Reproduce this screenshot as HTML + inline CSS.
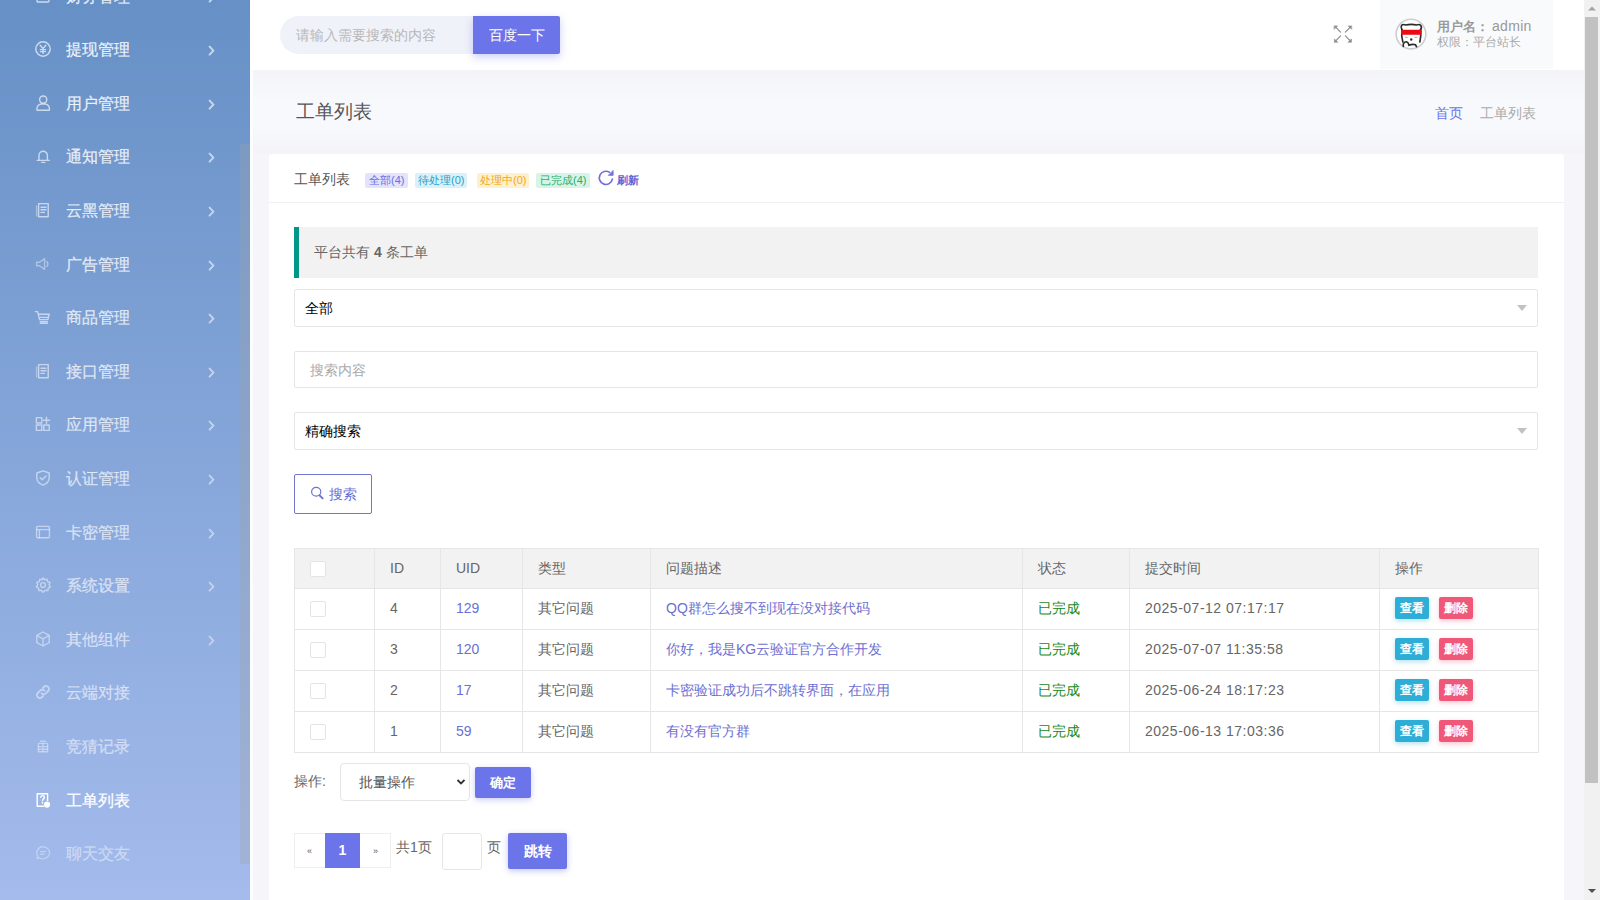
<!DOCTYPE html>
<html><head><meta charset="utf-8">
<style>
*{box-sizing:border-box;margin:0;padding:0}
html,body{width:1600px;height:900px;overflow:hidden;background:#f6f6fa;font-family:"Liberation Sans",sans-serif;font-size:14px;color:#666}
.abs{position:absolute}
#sb{left:0;top:0;width:250px;height:900px;background:linear-gradient(180deg,#6690c6 0%,#a4bbec 100%);overflow:hidden;color:rgba(255,255,255,.72)}
#sbtrack{left:240px;top:144px;width:10px;height:720px;background:rgba(160,160,160,.28)}
.mi{position:absolute;left:0;width:250px;height:54px}
.mi .ic{position:absolute;left:34px;top:18px;width:18px;height:18px;opacity:.8}
.mi.act .ic{opacity:1}
.mi .tx{position:absolute;left:66px;top:1px;line-height:54px;font-size:15.5px;-webkit-text-stroke:.25px currentColor}
.mi .ch{position:absolute;left:207px;top:23px;width:9px;height:12px}

#hd{left:250px;top:0;width:1334px;height:70px;background:#fff}
#wstrip{left:250px;top:70px;width:3px;height:830px;background:#fbfdff}
#srch{left:280px;top:16px;width:193px;height:38px;background:#f0f2f9;border-radius:19px 0 0 19px;color:#b8b8b8;font-size:14px;line-height:38px;padding-left:16px}
#sbtn{left:473px;top:16px;width:87px;height:38px;background:#6b74e9;color:#fff;font-size:14px;line-height:38px;text-align:center;border-radius:0 2px 2px 0;box-shadow:0 3px 8px rgba(107,116,233,.35)}
#fs{left:1334px;top:25px;width:18px;height:18px}
#user{left:1380px;top:0;width:173px;height:69px;background:#f9fafc}
#avatar{left:1395px;top:19px;width:32px;height:32px;border-radius:50%;border:1px solid #ddd;background:#fff;overflow:hidden}
#un{left:1437px;top:17px;font-size:13px;color:#999;line-height:18px;white-space:nowrap;font-weight:bold}
#ur{left:1437px;top:34px;font-size:12px;color:#aaa;line-height:16px;white-space:nowrap}
#scroll{left:1584px;top:0;width:16px;height:900px;background:#f1f1f1}
#thumb{left:1585px;top:17px;width:13px;height:766px;background:#c1c1c1}
#ptitle{left:296px;top:99px;font-size:19px;color:#555;line-height:26px}
#bc{left:1435px;top:103px;font-size:14px;line-height:20px;white-space:nowrap}
#card{left:269px;top:154px;width:1295px;height:760px;background:#fff;border-radius:3px}
#chd{left:269px;top:154px;width:1295px;height:49px;border-bottom:1px solid #f0f0f0}
.tag{position:absolute;top:173px;height:15px;line-height:15px;font-size:11px;padding:0 3px;border-radius:2px;white-space:nowrap}
#alert{left:294px;top:227px;width:1244px;height:51px;background:#f2f2f2;border-left:5px solid #009688;line-height:51px;padding-left:15px;color:#666;font-size:14px}
.sel{position:absolute;left:294px;width:1244px;background:#fff;border:1px solid #e6e6e6;border-radius:2px;line-height:36px;padding-left:10px;color:#000;font-size:14px}
.sel .arr{position:absolute;right:10px;top:15px;width:0;height:0;border-left:5.5px solid transparent;border-right:5.5px solid transparent;border-top:6px solid #c2c2c2}
#sbtn2{left:294px;top:474px;width:78px;height:40px;border:1px solid #7276cc;border-radius:2px;color:#6a6fd4;line-height:38px;font-size:14px;padding-left:34px}
table{position:absolute;left:294px;top:548px;width:1245px;border-collapse:collapse;font-size:14px;color:#666}
th,td{border:1px solid #e6e6e6;padding:0 15px 2px;text-align:left;font-weight:normal;height:41px;line-height:20px}
th{background:#f2f2f2;height:40px}
.cb{display:inline-block;width:16px;height:16px;border:1px solid #e4e4e4;border-radius:2px;background:#fff;vertical-align:middle}
.lk{color:#6b70d2}
.ok{color:#1a8a1a}
.dt{letter-spacing:.5px}
.bx{display:inline-block;height:22px;line-height:22px;padding:0 5px;font-size:12px;color:#fff;font-weight:bold;border-radius:2px;vertical-align:middle}
.bv{background:#2eaed6;box-shadow:0 2px 5px rgba(46,174,214,.35)}
.bd{background:#f0587a;box-shadow:0 2px 5px rgba(240,88,122,.35);margin-left:10px}
</style></head><body>
<div id="sb" class="abs">
<div class="mi" style="top:-31.4px;color:rgba(255,255,255,0.85)"><svg class="ic" viewBox="0 0 18 18" fill="none" stroke="currentColor" stroke-width="1.4" stroke-linecap="round" stroke-linejoin="round"><rect x="3" y="3" width="12" height="12" rx="1"/></svg><span class="tx">财务管理</span><svg class="ch" viewBox="0 0 9 12" fill="none" stroke="currentColor" stroke-width="2" stroke-linecap="round" stroke-linejoin="round" opacity=".75"><path d="M2.6 1.6 6.4 5.6 2.6 9.6"/></svg></div>
<div class="mi" style="top:22.2px;color:rgba(255,255,255,0.85)"><svg class="ic" viewBox="0 0 18 18" fill="none" stroke="currentColor" stroke-width="1.4" stroke-linecap="round" stroke-linejoin="round"><circle cx="9" cy="9" r="7.2"/><path d="M6.2 5.2 9 8.6 11.8 5.2M9 8.6V13.4M6.4 9.6h5.2M6.4 11.6h5.2"/></svg><span class="tx">提现管理</span><svg class="ch" viewBox="0 0 9 12" fill="none" stroke="currentColor" stroke-width="2" stroke-linecap="round" stroke-linejoin="round" opacity=".75"><path d="M2.6 1.6 6.4 5.6 2.6 9.6"/></svg></div>
<div class="mi" style="top:75.8px;color:rgba(255,255,255,0.83)"><svg class="ic" viewBox="0 0 18 18" fill="none" stroke="currentColor" stroke-width="1.4" stroke-linecap="round" stroke-linejoin="round"><circle cx="9.2" cy="5.6" r="3.6"/><path d="M3 16.2v-1.6a4.6 4.6 0 0 1 4.6-4.6h3.2a4.6 4.6 0 0 1 4.6 4.6v1.6z"/></svg><span class="tx">用户管理</span><svg class="ch" viewBox="0 0 9 12" fill="none" stroke="currentColor" stroke-width="2" stroke-linecap="round" stroke-linejoin="round" opacity=".75"><path d="M2.6 1.6 6.4 5.6 2.6 9.6"/></svg></div>
<div class="mi" style="top:129.4px;color:rgba(255,255,255,0.8)"><svg class="ic" viewBox="0 0 18 18" fill="none" stroke="currentColor" stroke-width="1.4" stroke-linecap="round" stroke-linejoin="round"><path d="M5 13.2V8.4a4.2 4.2 0 0 1 8.4 0v4.8M3.2 13.4h12M7.6 15.4h3.2"/></svg><span class="tx">通知管理</span><svg class="ch" viewBox="0 0 9 12" fill="none" stroke="currentColor" stroke-width="2" stroke-linecap="round" stroke-linejoin="round" opacity=".75"><path d="M2.6 1.6 6.4 5.6 2.6 9.6"/></svg></div>
<div class="mi" style="top:183.0px;color:rgba(255,255,255,0.77)"><svg class="ic" viewBox="0 0 18 18" fill="none" stroke="currentColor" stroke-width="1.4" stroke-linecap="round" stroke-linejoin="round"><rect x="4.6" y="2.6" width="9.6" height="13.2"/><path d="M7 6.2h5M7 8.8h5M7 11.4h3.4"/><path d="M2.6 5v10" opacity=".6"/></svg><span class="tx">云黑管理</span><svg class="ch" viewBox="0 0 9 12" fill="none" stroke="currentColor" stroke-width="2" stroke-linecap="round" stroke-linejoin="round" opacity=".75"><path d="M2.6 1.6 6.4 5.6 2.6 9.6"/></svg></div>
<div class="mi" style="top:236.6px;color:rgba(255,255,255,0.75)"><svg class="ic" viewBox="0 0 18 18" fill="none" stroke="currentColor" stroke-width="1.4" stroke-linecap="round" stroke-linejoin="round"><path d="M2.6 7.2h3l5-3.6v10.8l-5-3.6h-3zM12.8 6.4a3.6 3.6 0 0 1 0 5.2" opacity=".7"/></svg><span class="tx">广告管理</span><svg class="ch" viewBox="0 0 9 12" fill="none" stroke="currentColor" stroke-width="2" stroke-linecap="round" stroke-linejoin="round" opacity=".75"><path d="M2.6 1.6 6.4 5.6 2.6 9.6"/></svg></div>
<div class="mi" style="top:290.2px;color:rgba(255,255,255,0.73)"><svg class="ic" viewBox="0 0 18 18" fill="none" stroke="currentColor" stroke-width="1.4" stroke-linecap="round" stroke-linejoin="round"><path d="M1.4 3.6h2.2l2 8h8.2l1.4-5.4H4.8M6.4 9.4h7.4"/><path d="M6.2 13.6h7.2M6.2 15.2h7.2"/></svg><span class="tx">商品管理</span><svg class="ch" viewBox="0 0 9 12" fill="none" stroke="currentColor" stroke-width="2" stroke-linecap="round" stroke-linejoin="round" opacity=".75"><path d="M2.6 1.6 6.4 5.6 2.6 9.6"/></svg></div>
<div class="mi" style="top:343.8px;color:rgba(255,255,255,0.71)"><svg class="ic" viewBox="0 0 18 18" fill="none" stroke="currentColor" stroke-width="1.4" stroke-linecap="round" stroke-linejoin="round"><rect x="4.6" y="2.6" width="9.6" height="13.2"/><path d="M7 6.2h5M7 8.8h5M7 11.4h3.4"/><path d="M2.6 5v10" opacity=".6"/></svg><span class="tx">接口管理</span><svg class="ch" viewBox="0 0 9 12" fill="none" stroke="currentColor" stroke-width="2" stroke-linecap="round" stroke-linejoin="round" opacity=".75"><path d="M2.6 1.6 6.4 5.6 2.6 9.6"/></svg></div>
<div class="mi" style="top:397.4px;color:rgba(255,255,255,0.69)"><svg class="ic" viewBox="0 0 18 18" fill="none" stroke="currentColor" stroke-width="1.4" stroke-linecap="round" stroke-linejoin="round"><rect x="2.4" y="2.6" width="5.4" height="5.4"/><rect x="2.4" y="10" width="5.4" height="5.4"/><rect x="9.8" y="10" width="5.4" height="5.4"/><path d="M12.5 2.2v6.2M9.4 5.3h6.2"/></svg><span class="tx">应用管理</span><svg class="ch" viewBox="0 0 9 12" fill="none" stroke="currentColor" stroke-width="2" stroke-linecap="round" stroke-linejoin="round" opacity=".75"><path d="M2.6 1.6 6.4 5.6 2.6 9.6"/></svg></div>
<div class="mi" style="top:451.0px;color:rgba(255,255,255,0.66)"><svg class="ic" viewBox="0 0 18 18" fill="none" stroke="currentColor" stroke-width="1.4" stroke-linecap="round" stroke-linejoin="round"><path d="M9 1.8 15.2 4v4.6c0 4-2.8 6.4-6.2 7.6C5.6 15 2.8 12.6 2.8 8.6V4z"/><path d="M6.2 8.8l2 2 3.8-3.8"/></svg><span class="tx">认证管理</span><svg class="ch" viewBox="0 0 9 12" fill="none" stroke="currentColor" stroke-width="2" stroke-linecap="round" stroke-linejoin="round" opacity=".75"><path d="M2.6 1.6 6.4 5.6 2.6 9.6"/></svg></div>
<div class="mi" style="top:504.6px;color:rgba(255,255,255,0.62)"><svg class="ic" viewBox="0 0 18 18" fill="none" stroke="currentColor" stroke-width="1.4" stroke-linecap="round" stroke-linejoin="round"><rect x="2.6" y="3.4" width="12.8" height="11.4" rx="1"/><path d="M2.6 6.6h12.8M5.4 6.6v8.2"/></svg><span class="tx">卡密管理</span><svg class="ch" viewBox="0 0 9 12" fill="none" stroke="currentColor" stroke-width="2" stroke-linecap="round" stroke-linejoin="round" opacity=".75"><path d="M2.6 1.6 6.4 5.6 2.6 9.6"/></svg></div>
<div class="mi" style="top:558.2px;color:rgba(255,255,255,0.6)"><svg class="ic" viewBox="0 0 18 18" fill="none" stroke="currentColor" stroke-width="1.4" stroke-linecap="round" stroke-linejoin="round"><circle cx="9" cy="9" r="2.4"/><path d="M9 1.8l1.6 2 2.4-.6.6 2.4 2.4.9-.9 2.3 1.3 2.1-2.2 1.2-.3 2.5-2.5-.3L9 16.2l-1.6-1.9-2.5.3-.3-2.5-2.2-1.2 1.3-2.1-.9-2.3 2.4-.9.6-2.4 2.4.6z"/></svg><span class="tx">系统设置</span><svg class="ch" viewBox="0 0 9 12" fill="none" stroke="currentColor" stroke-width="2" stroke-linecap="round" stroke-linejoin="round" opacity=".75"><path d="M2.6 1.6 6.4 5.6 2.6 9.6"/></svg></div>
<div class="mi" style="top:611.8px;color:rgba(255,255,255,0.58)"><svg class="ic" viewBox="0 0 18 18" fill="none" stroke="currentColor" stroke-width="1.4" stroke-linecap="round" stroke-linejoin="round"><path d="M9 2 15.2 5.4v7.2L9 16 2.8 12.6V5.4zM2.8 5.4 9 8.8l6.2-3.4M9 8.8V16"/></svg><span class="tx">其他组件</span><svg class="ch" viewBox="0 0 9 12" fill="none" stroke="currentColor" stroke-width="2" stroke-linecap="round" stroke-linejoin="round" opacity=".75"><path d="M2.6 1.6 6.4 5.6 2.6 9.6"/></svg></div>
<div class="mi" style="top:665.4px;color:rgba(255,255,255,0.55)"><svg class="ic" viewBox="0 0 18 18" fill="none" stroke="currentColor" stroke-width="1.4" stroke-linecap="round" stroke-linejoin="round"><path d="M7.6 10.4a3 3 0 0 0 4.2 0l2.6-2.6a3 3 0 0 0-4.2-4.2L9 4.8M10.4 7.6a3 3 0 0 0-4.2 0L3.6 10.2a3 3 0 0 0 4.2 4.2L9 13.2" stroke-width="2"/></svg><span class="tx">云端对接</span></div>
<div class="mi" style="top:719.0px;color:rgba(255,255,255,0.5)"><svg class="ic" viewBox="0 0 18 18" fill="none" stroke="currentColor" stroke-width="1.4" stroke-linecap="round" stroke-linejoin="round"><rect x="4.4" y="6.4" width="9.2" height="8.4"/><path d="M4.4 9.6h9.2M4.4 12.2h9.2M9 6.4v8.4M6.4 4.2h5.2"/></svg><span class="tx">竞猜记录</span></div>
<div class="mi act" style="top:772.6px;color:rgba(255,255,255,1)"><svg class="ic" viewBox="0 0 18 18" fill="none" stroke="currentColor" stroke-width="1.4" stroke-linecap="round" stroke-linejoin="round"><path d="M13.6 9.4V2.8H3.2v12.4h6.6"/><path d="M6.8 6.4a1.8 1.8 0 1 1 2.6 1.6c-.6.4-.9.8-.9 1.5M8.5 11.4v.6"/><circle cx="13" cy="13.6" r="2.4" fill="currentColor"/></svg><span class="tx">工单列表</span></div>
<div class="mi" style="top:826.2px;color:rgba(255,255,255,0.42)"><svg class="ic" viewBox="0 0 18 18" fill="none" stroke="currentColor" stroke-width="1.4" stroke-linecap="round" stroke-linejoin="round"><path d="M9 2.8a6.4 6 0 1 1-3.4 11l-2.6.8.9-2.4A6.4 6 0 0 1 9 2.8z"/><path d="M6.4 7.6h5.2M6.4 10.2h3.6"/></svg><span class="tx">聊天交友</span></div>
</div>
<div id="sbtrack" class="abs"></div>
<div id="hd" class="abs"></div><div id="wstrip" class="abs"></div><div class="abs" style="left:253px;top:70px;width:1331px;height:84px;background:linear-gradient(180deg,#f3f3f8 0,#f5f6fa 12px,#f7f9fd 35px,#f7f9fd 55px,#f5f6fa 72px,#f3f3f8 84px)"></div>
<div id="srch" class="abs">请输入需要搜索的内容</div>
<div id="sbtn" class="abs">百度一下</div>
<div id="user" class="abs"></div>
<svg class="abs" style="left:1390px;top:14px" width="42" height="42" viewBox="0 0 900 900">
<circle cx="450" cy="430" r="318" fill="#fff" stroke="#cdcdcd" stroke-width="34"/>
<path d="M255 335 C215 270 250 200 335 235 C400 220 510 220 570 235 C650 200 700 270 655 335" fill="none" stroke="#2a2a2a" stroke-width="36" stroke-linecap="round"/>
<path d="M255 330 C245 430 250 520 275 600 M655 330 C665 430 660 520 640 600" fill="none" stroke="#2a2a2a" stroke-width="36" stroke-linecap="round"/>
<rect x="236" y="335" width="444" height="108" rx="24" fill="#ea0a14"/>
<path d="M285 695 C275 640 300 595 350 595 C390 600 400 640 405 668 C460 650 510 650 545 660 L568 700" fill="none" stroke="#2a2a2a" stroke-width="36" stroke-linecap="round"/>
<circle cx="455" cy="545" r="26" fill="#333"/>
<path d="M320 500h60M525 500h60" stroke="#aaa" stroke-width="20"/>
</svg>
<div id="un" class="abs">用户名：<span style="font-size:14px;font-weight:normal;letter-spacing:.3px;margin-left:3px">admin</span></div>
<div id="ur" class="abs">权限：平台站长</div>
<div id="scroll" class="abs"></div>
<div id="thumb" class="abs"></div>
<svg class="abs" style="left:1584px;top:0" width="16" height="17" viewBox="0 0 16 17"><path d="M4 10.5h8L8 6.5z" fill="#a3a3a3"/></svg>
<svg class="abs" style="left:1584px;top:883px" width="16" height="17" viewBox="0 0 16 17"><path d="M4 6h8l-4 4z" fill="#505050"/></svg>
<div id="ptitle" class="abs">工单列表</div>
<div id="bc" class="abs"><span style="color:#6b74e9">首页</span><span style="color:#aaa;margin-left:17px">工单列表</span></div>
<div id="card" class="abs"></div>
<div id="chd" class="abs"></div>
<div class="abs" style="left:294px;top:169px;line-height:20px;color:#555">工单列表</div>
<div id="alert" class="abs">平台共有 <b>4</b> 条工单</div>
<div class="sel" style="top:289px;height:38px">全部<i class="arr"></i></div>
<div class="sel" style="top:351px;height:37px;color:#aaa;padding-left:15px">搜索内容</div>
<div class="sel" style="top:412px;height:38px">精确搜索<i class="arr"></i></div>
<div id="sbtn2" class="abs">搜索</div>
<table>
<tr><th style="width:80px"><span class="cb"></span></th><th style="width:66px">ID</th><th style="width:82px">UID</th><th style="width:128px">类型</th><th style="width:372px">问题描述</th><th style="width:107px">状态</th><th style="width:250px">提交时间</th><th style="width:159px">操作</th></tr>
<tr><td><span class="cb"></span></td><td>4</td><td class="lk">129</td><td>其它问题</td><td class="lk">QQ群怎么搜不到现在没对接代码</td><td class="ok">已完成</td><td class="dt">2025-07-12 07:17:17</td><td><span class="bx bv">查看</span><span class="bx bd">删除</span></td></tr>
<tr><td><span class="cb"></span></td><td>3</td><td class="lk">120</td><td>其它问题</td><td class="lk">你好，我是KG云验证官方合作开发</td><td class="ok">已完成</td><td class="dt">2025-07-07 11:35:58</td><td><span class="bx bv">查看</span><span class="bx bd">删除</span></td></tr>
<tr><td><span class="cb"></span></td><td>2</td><td class="lk">17</td><td>其它问题</td><td class="lk">卡密验证成功后不跳转界面，在应用</td><td class="ok">已完成</td><td class="dt">2025-06-24 18:17:23</td><td><span class="bx bv">查看</span><span class="bx bd">删除</span></td></tr>
<tr><td><span class="cb"></span></td><td>1</td><td class="lk">59</td><td>其它问题</td><td class="lk">有没有官方群</td><td class="ok">已完成</td><td class="dt">2025-06-13 17:03:36</td><td><span class="bx bv">查看</span><span class="bx bd">删除</span></td></tr>
</table>

<span class="tag" style="left:365px;padding:0 4px;background:#e3e3fb;color:#6a6fe6">全部(4)</span>
<span class="tag" style="left:415px;background:#d9f1fb;color:#2b9fc4">待处理(0)</span>
<span class="tag" style="left:477px;background:#fdf0cf;color:#f3a712">处理中(0)</span>
<span class="tag" style="left:536px;padding:0 4px;background:#d6f5e6;color:#1eae6e">已完成(4)</span>
<svg class="abs" style="left:597px;top:169px" width="18" height="18" viewBox="0 0 18 18" fill="none" stroke="#7270d6" stroke-width="1.7" stroke-linecap="round"><path d="M15.4 10.2A6.6 6.6 0 1 1 12.6 3.4"/><path d="M16.2 1.6v4.8h-4.8z" fill="#7270d6" stroke-width=".6" stroke-linejoin="round"/></svg>
<span class="abs" style="left:617px;top:172px;font-size:11px;line-height:16px;color:#5f62d2;font-weight:bold">刷新</span>
<svg class="abs" style="left:310px;top:486px" width="16" height="16" viewBox="0 0 16 16" fill="none" stroke="#6f73d0" stroke-width="1.2" stroke-linecap="round"><ellipse cx="6.2" cy="5.8" rx="4.6" ry="4.4"/><path d="M9.6 9.4l3 3" stroke-width="2"/></svg>
<svg class="abs" style="left:1328px;top:20px" width="30" height="30" viewBox="0 0 30 30" fill="none" stroke="#8c8c8c" stroke-width="1.2" stroke-linecap="round"><path d="M7.4 6.9 12.6 12.1M22.6 6.9 17.4 12.1M7.4 21.1 12.6 15.9M22.6 21.1 17.4 15.9"/><path d="M6.4 5.9h3.2L6.4 9.1zM23.4 5.9h-3.2l3.2 3.2zM6.4 22.1v-3.2l3.2 3.2zM23.4 22.1v-3.2l-3.2 3.2z" fill="#8c8c8c" stroke-width=".6" stroke-linejoin="round"/></svg>
<div class="abs" style="left:294px;top:772px;line-height:18px;color:#666">操作:</div>
<div class="abs" style="left:340px;top:763px;width:130px;height:38px;border:1px solid #e6e6e6;border-radius:4px;background:#fff;line-height:36px;padding-left:18px;color:#555">批量操作
<svg class="abs" style="left:115px;top:14px" width="10" height="8" viewBox="0 0 10 8" fill="none" stroke="#333" stroke-width="1.8"><path d="M1.5 2 5 5.5 8.5 2"/></svg></div>
<div class="abs" style="left:475px;top:767px;width:56px;height:31px;background:#6b74e9;border-radius:2px;color:#fff;font-size:13px;font-weight:bold;line-height:31px;text-align:center;box-shadow:0 2px 6px rgba(107,116,233,.35)">确定</div>
<div class="abs" style="left:294px;top:833px;width:97px;height:35px;border:1px solid #eee;background:#fff"></div>
<div class="abs" style="left:294px;top:834px;width:31px;height:35px;line-height:35px;text-align:center;font-size:9px;color:#555">«</div>
<div class="abs" style="left:325px;top:833px;width:35px;height:35px;line-height:35px;text-align:center;background:#6b74e9;color:#fff;font-weight:bold">1</div>
<div class="abs" style="left:360px;top:834px;width:31px;height:35px;line-height:35px;text-align:center;font-size:9px;color:#555">»</div>
<div class="abs" style="left:396px;top:838px;line-height:18px;color:#666">共1页</div>
<div class="abs" style="left:442px;top:833px;width:40px;height:37px;border:1px solid #e6e6e6;border-radius:3px;background:#fff"></div>
<div class="abs" style="left:487px;top:838px;line-height:18px;color:#666">页</div>
<div class="abs" style="left:508px;top:833px;width:59px;height:36px;background:#6b74e9;border-radius:2px;color:#fff;font-size:14px;font-weight:bold;line-height:36px;text-align:center;box-shadow:0 2px 6px rgba(107,116,233,.4)">跳转</div>
</body></html>
